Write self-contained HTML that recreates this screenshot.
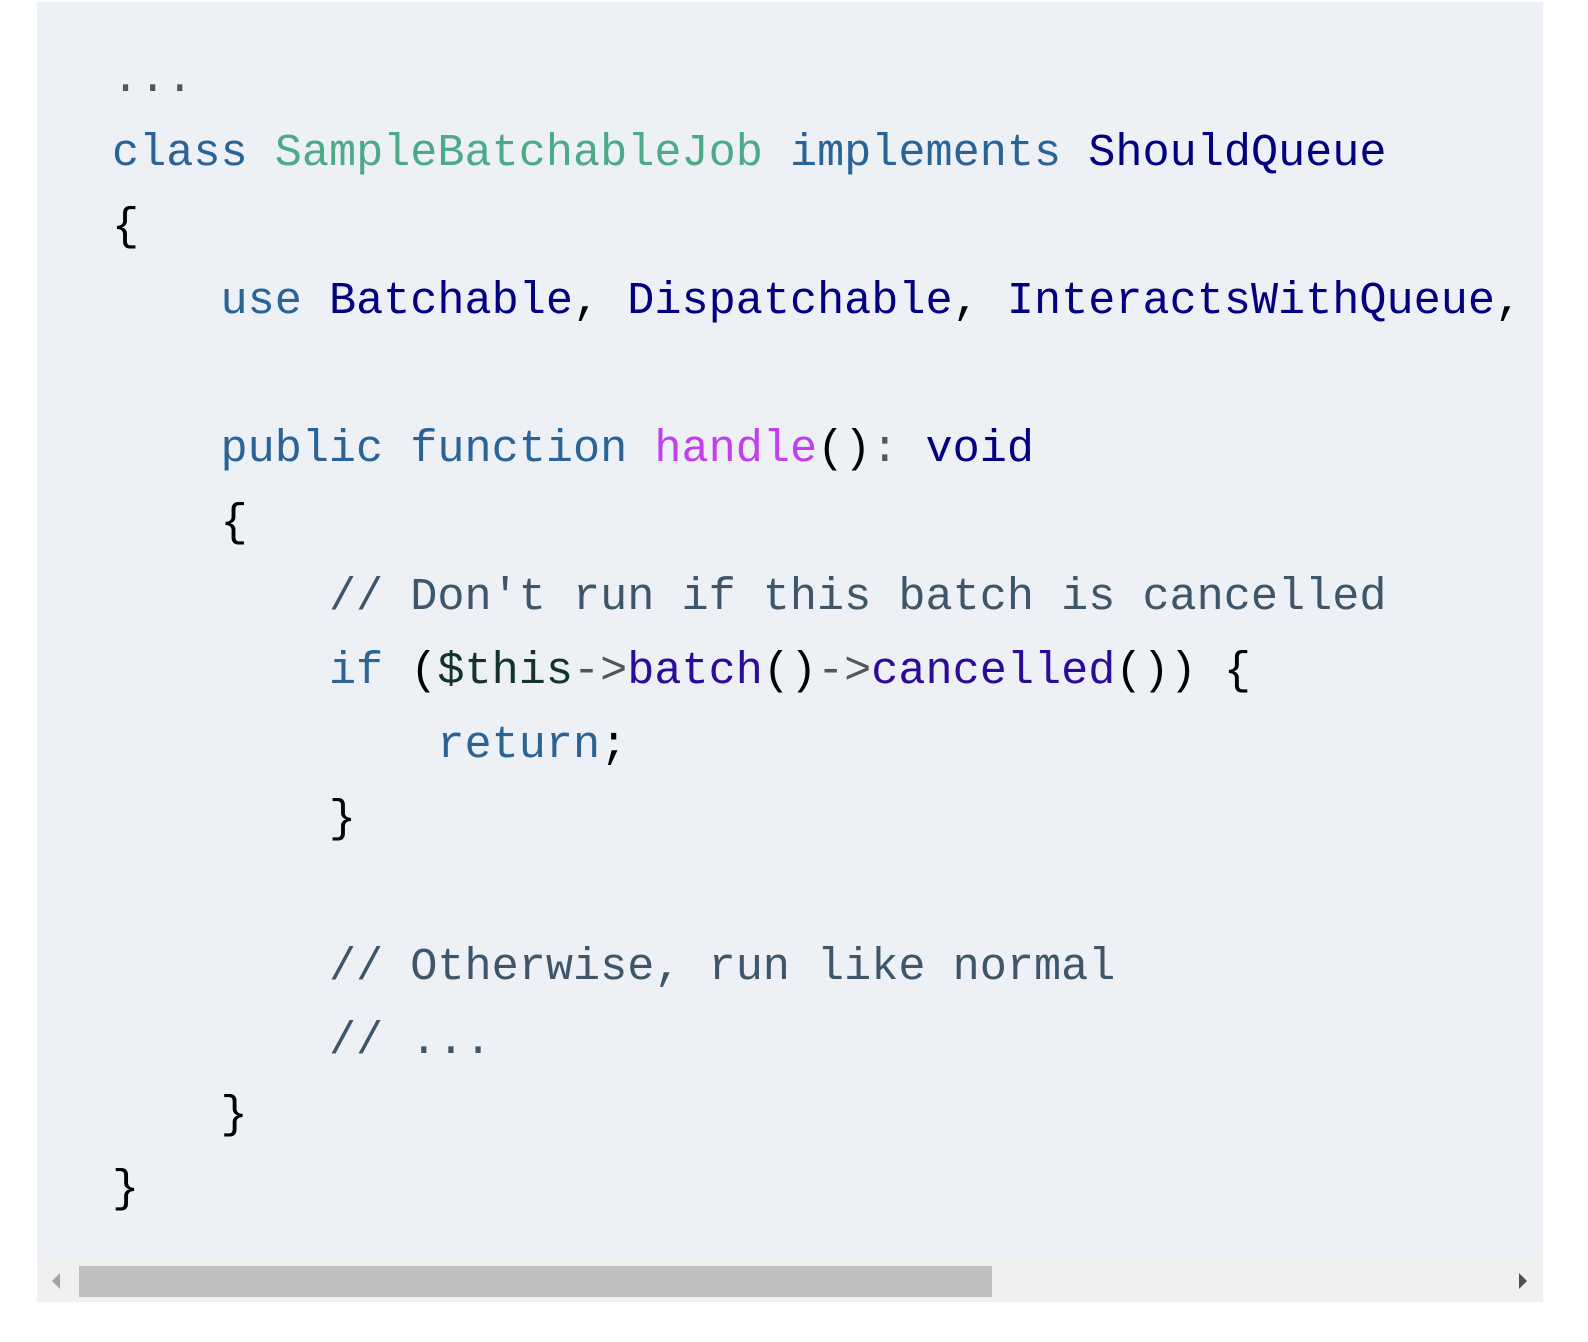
<!DOCTYPE html>
<html><head><meta charset="utf-8"><style>
html,body{margin:0;padding:0;background:#fff;width:1588px;height:1342px;overflow:hidden}
.blk{position:absolute;left:37px;top:2px;width:1506px;height:1300px;background:#edf0f5;overflow:hidden}
pre{margin:0;position:absolute;left:75px;top:40px;font-family:"Liberation Mono",monospace;font-size:45.2px;line-height:74px;color:#000;white-space:pre}
.k{color:#2a6496}.c{color:#4caa88}.t{color:#000080}.f{color:#c23ff0}.m{color:#3e566a}.v{color:#13332d}.o{color:#555}.p{color:#2e0a99}.d{color:#555}
.track{position:absolute;left:37px;top:1258px;width:1506px;height:44px;background:#f0f0f0}
.thumb{position:absolute;left:79px;top:1266px;width:913px;height:31px;background:#c0c0c0}
.al{position:absolute;left:52px;top:1273px;width:0;height:0;border-top:8px solid transparent;border-bottom:8px solid transparent;border-right:8px solid #a3a3a3}
.ar{position:absolute;left:1519px;top:1273px;width:0;height:0;border-top:8px solid transparent;border-bottom:8px solid transparent;border-left:8px solid #505050}
</style></head><body>
<div class="blk"><pre><span class="d">...</span>
<span class="k">class</span> <span class="c">SampleBatchableJob</span> <span class="k">implements</span> <span class="t">ShouldQueue</span>
{
    <span class="k">use</span> <span class="t">Batchable</span>, <span class="t">Dispatchable</span>, <span class="t">InteractsWithQueue</span>, <span class="t">Queueable</span>, <span class="t">SerializesModels</span>;

    <span class="k">public</span> <span class="k">function</span> <span class="f">handle</span>()<span class="o">:</span> <span class="t">void</span>
    {
        <span class="m">// Don't run if this batch is cancelled</span>
        <span class="k">if</span> (<span class="v">$this</span><span class="o">-&gt;</span><span class="p">batch</span>()<span class="o">-&gt;</span><span class="p">cancelled</span>()) {
            <span class="k">return</span>;
        }

        <span class="m">// Otherwise, run like normal</span>
        <span class="m">// ...</span>
    }
}</pre></div>
<div class="track"></div><div class="thumb"></div><div class="al"></div><div class="ar"></div>
</body></html>
